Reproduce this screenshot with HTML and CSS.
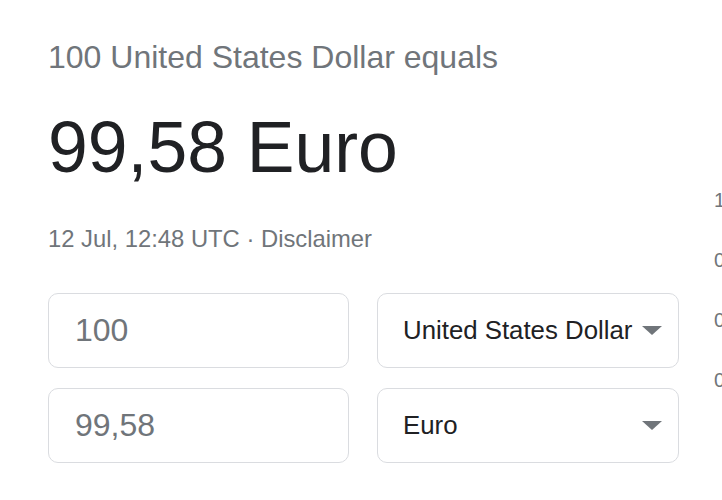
FILE: index.html
```html
<!DOCTYPE html>
<html lang="en">
<head>
    <meta charset="UTF-8">
    <meta name="viewport" content="width=device-width, initial-scale=1.0">
    <title>Currency Converter</title>
    <link rel="stylesheet" href="styles.css">
</head>
<body>
    <div class="page">
        <div class="converter">
            <div class="headline">100 United States Dollar equals</div>
            <div class="result">99,58 Euro</div>
            <div class="meta">12 Jul, 12:48 UTC · <span class="disclaimer">Disclaimer</span></div>

            <div class="fields">
                <div class="field">100</div>
                <div class="select">
                    <span>United States Dollar</span>
                    <span class="arrow"></span>
                </div>
                <div class="field">99,58</div>
                <div class="select">
                    <span>Euro</span>
                    <span class="arrow"></span>
                </div>
            </div>
        </div>

        <div class="chart-axis">
            <div>1,00</div>
            <div>0,99</div>
            <div>0,98</div>
            <div>0,97</div>
        </div>
    </div>
</body>
</html>
```

FILE: styles.css
```css
body {
    margin: 0;
    background: white;
    font-family: "Liberation Sans", Arial, sans-serif;
    overflow: hidden;
}
.page {
    display: flex;
    gap: 35px;
    padding: 37px 0 0 48px;
}
.converter {
    width: 631px;
    flex-shrink: 0;
}
.headline {
    font-size: 32px;
    line-height: 40px;
    color: #70757a;
}
.result {
    margin-top: 30px;
    font-size: 71.5px;
    line-height: 80px;
    color: #202124;
}
.meta {
    margin-top: 37px;
    font-size: 23.8px;
    line-height: 30px;
    color: #70757a;
}
.fields {
    display: grid;
    grid-template-columns: 301px 302px;
    grid-auto-rows: 75px;
    column-gap: 28px;
    row-gap: 20px;
    margin-top: 39px;
}
.field,
.select {
    display: flex;
    align-items: center;
    box-sizing: border-box;
    border: 1px solid #dadce0;
    border-radius: 10px;
}
.field {
    padding-left: 26px;
    font-size: 32px;
    color: #70757a;
}
.select {
    justify-content: space-between;
    padding: 0 16px 0 25px;
    font-size: 25.8px;
    color: #202124;
}
.arrow {
    width: 0;
    height: 0;
    border-left: 10px solid transparent;
    border-right: 10px solid transparent;
    border-top: 9px solid #70757a;
}
.chart-axis {
    padding-top: 133px;
    font-size: 20px;
    line-height: 60px;
    color: #70757a;
    white-space: nowrap;
}
```
